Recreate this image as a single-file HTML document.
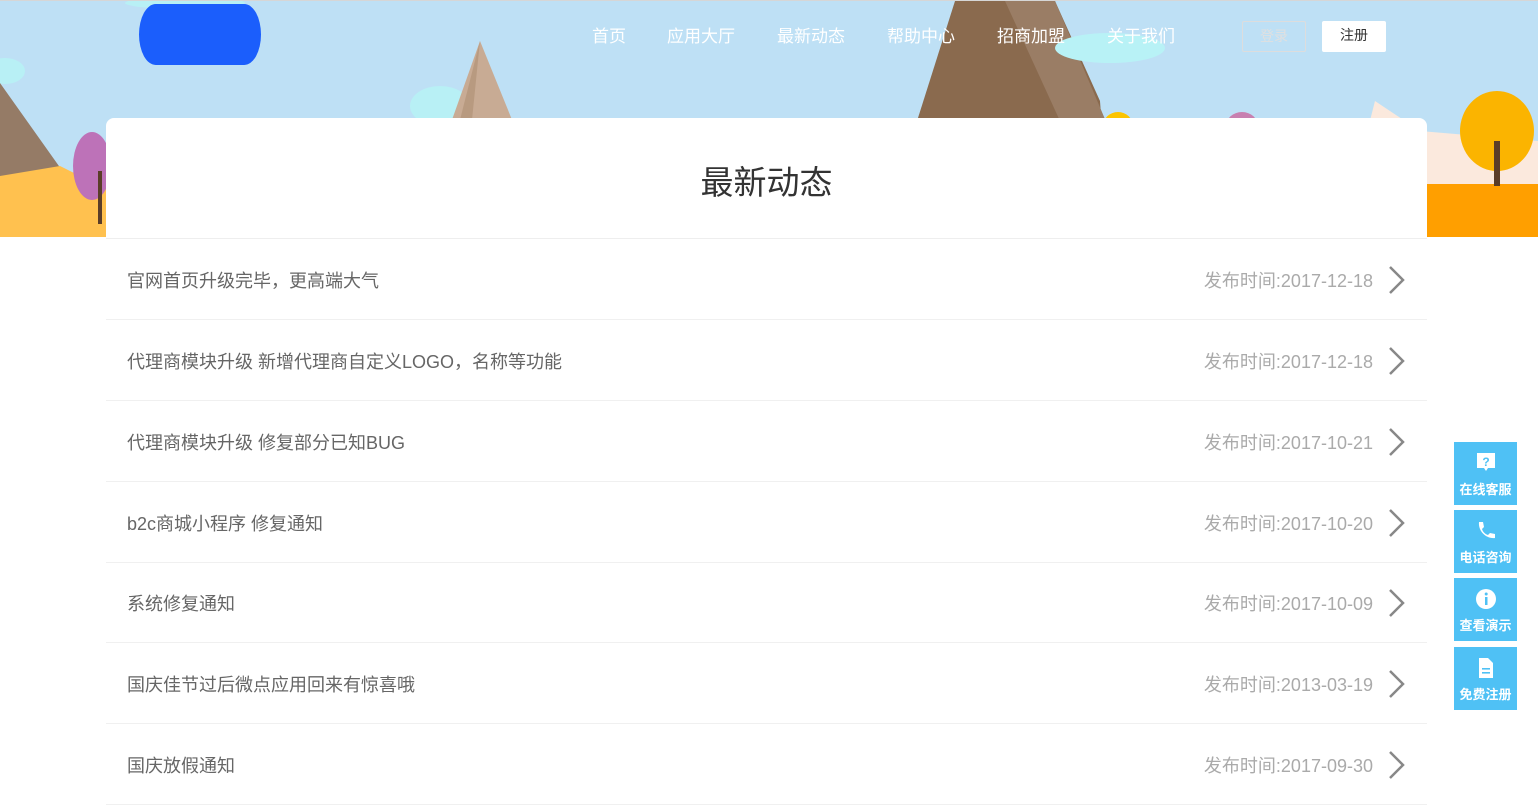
<!DOCTYPE html>
<html><head><meta charset="utf-8"><style>
*{margin:0;padding:0;box-sizing:border-box}
body{width:1538px;height:781px;overflow:hidden;background:#fff;font-family:"Liberation Sans","Noto Sans CJK SC",sans-serif;position:relative}
.hdr{position:absolute;left:0;top:0;width:1538px;height:237px;background:#bee0f5;overflow:hidden;border-top:1px solid #d6d6d6}
.logo{position:absolute;left:139px;top:3px;width:122px;height:61px;background:#1b5efc;border-radius:22px/40px}
.nav{position:absolute;top:21px;color:#fff;font-size:17px}
.btn{position:absolute;top:20px;width:64px;height:31px;font-size:14px;text-align:center;line-height:29px;border-radius:2px}
.card{position:absolute;left:106px;top:118px;width:1321px;height:121px;background:#fff;border-radius:8px 8px 0 0;border-bottom:1px solid #eee}
.card h1{font-weight:normal;font-size:33px;color:#333;text-align:center;margin-top:38px}
.row{position:absolute;left:106px;width:1321px;height:81px;border-bottom:1px solid #f0f0f0}
.row .t{position:absolute;left:21px;top:28px;font-size:18px;color:#666}
.row .d{position:absolute;right:54px;top:28px;font-size:18px;color:#aaa}
.row svg{position:absolute;right:20px;top:26px}
.side{position:absolute;left:1454px;width:63px;height:63px;background:#4fc1f5;color:#fff;font-size:13px;text-align:center}
.side span{position:absolute;left:0;right:0;top:37px;font-weight:bold}
.side svg{position:absolute;left:21px;top:10px}
</style></head><body>
<div class="hdr">
<svg width="1538" height="237" style="position:absolute;left:0;top:0">
<ellipse cx="185" cy="2" rx="60" ry="6" fill="#b8f0f5"/>
<ellipse cx="5" cy="70" rx="20" ry="13" fill="#b8f0f5"/>
<polygon points="0,82 110,237 0,237" fill="#957b66"/>
<polygon points="0,175 60,165 110,190 110,237 0,237" fill="#ffc14f"/>
<ellipse cx="92" cy="165" rx="19" ry="34" fill="#bd72b8"/>
<rect x="98" y="170" width="4" height="53" fill="#5a3d28"/>
<ellipse cx="440" cy="105" rx="30" ry="20" fill="#b8f0f5"/>
<polygon points="480,40 410,237 560,237" fill="#c8ab94"/>
<polygon points="480,40 430,237 460,237" fill="#b89a80"/>
<polygon points="955,0 1055,0 1100,100 1110,237 880,237" fill="#8a6a4e"/>
<polygon points="1005,0 1055,0 1110,130 1060,120" fill="#9a7d65"/>
<ellipse cx="1110" cy="47" rx="55" ry="15" fill="#b8f2f6"/>
<ellipse cx="1118" cy="125" rx="15" ry="14" fill="#fcc400"/>
<ellipse cx="1242" cy="125" rx="16" ry="14" fill="#c880b0"/>
<polygon points="1340,237 1375,100 1420,130 1538,140 1538,237" fill="#fbe9dd"/>
<rect x="1427" y="183" width="111" height="54" fill="#ff9f00"/>
<ellipse cx="1497" cy="130" rx="37" ry="40" fill="#fbb400"/>
<rect x="1494" y="140" width="6" height="45" fill="#5a3d28"/>
</svg>
<div class="logo"></div>
<div class="nav" style="left:592px">首页</div>
<div class="nav" style="left:667px">应用大厅</div>
<div class="nav" style="left:777px">最新动态</div>
<div class="nav" style="left:887px">帮助中心</div>
<div class="nav" style="left:997px">招商加盟</div>
<div class="nav" style="left:1107px">关于我们</div>
<div class="btn" style="left:1242px;border:1px solid #ddd;color:#e0e0e0">登录</div>
<div class="btn" style="left:1322px;background:#fff;color:#333">注册</div>
</div>
<div class="card"><h1>最新动态</h1></div>
<div class="row" style="top:239px"><div class="t">官网首页升级完毕，更高端大气</div><div class="d">发布时间:2017-12-18</div><svg width="20" height="30"><polyline points="3,2 16,15 3,28" fill="none" stroke="#888" stroke-width="2.5"/></svg></div>
<div class="row" style="top:320px"><div class="t">代理商模块升级 新增代理商自定义LOGO，名称等功能</div><div class="d">发布时间:2017-12-18</div><svg width="20" height="30"><polyline points="3,2 16,15 3,28" fill="none" stroke="#888" stroke-width="2.5"/></svg></div>
<div class="row" style="top:401px"><div class="t">代理商模块升级 修复部分已知BUG</div><div class="d">发布时间:2017-10-21</div><svg width="20" height="30"><polyline points="3,2 16,15 3,28" fill="none" stroke="#888" stroke-width="2.5"/></svg></div>
<div class="row" style="top:482px"><div class="t">b2c商城小程序 修复通知</div><div class="d">发布时间:2017-10-20</div><svg width="20" height="30"><polyline points="3,2 16,15 3,28" fill="none" stroke="#888" stroke-width="2.5"/></svg></div>
<div class="row" style="top:562px"><div class="t">系统修复通知</div><div class="d">发布时间:2017-10-09</div><svg width="20" height="30"><polyline points="3,2 16,15 3,28" fill="none" stroke="#888" stroke-width="2.5"/></svg></div>
<div class="row" style="top:643px"><div class="t">国庆佳节过后微点应用回来有惊喜哦</div><div class="d">发布时间:2013-03-19</div><svg width="20" height="30"><polyline points="3,2 16,15 3,28" fill="none" stroke="#888" stroke-width="2.5"/></svg></div>
<div class="row" style="top:724px"><div class="t">国庆放假通知</div><div class="d">发布时间:2017-09-30</div><svg width="20" height="30"><polyline points="3,2 16,15 3,28" fill="none" stroke="#888" stroke-width="2.5"/></svg></div>
<div class="side" style="top:442px"><svg width="22" height="22"><path d="M2 1h18v15h-7l-2 3-2-3H2z" fill="#fff"/><text x="11" y="14" font-size="12" font-weight="bold" fill="#4fc1f5" text-anchor="middle" font-family="Liberation Sans">?</text></svg><span>在线客服</span></div>
<div class="side" style="top:510px"><svg width="22" height="22"><path d="M4 2l4 0 1 5-2 2c1 3 3 5 6 6l2-2 5 1 0 4c-9 1-17-7-16-16z" fill="#fff"/></svg><span>电话咨询</span></div>
<div class="side" style="top:578px"><svg width="22" height="22"><circle cx="11" cy="11" r="10" fill="#fff"/><rect x="10" y="9" width="2.5" height="8" fill="#4fc1f5"/><circle cx="11.2" cy="6" r="1.5" fill="#4fc1f5"/></svg><span>查看演示</span></div>
<div class="side" style="top:647px"><svg width="22" height="22"><path d="M4 1h9l5 5v15H4z" fill="#fff"/><rect x="7" y="11" width="8" height="1.6" fill="#4fc1f5"/><rect x="7" y="15" width="8" height="1.6" fill="#4fc1f5"/></svg><span>免费注册</span></div>
</body></html>
